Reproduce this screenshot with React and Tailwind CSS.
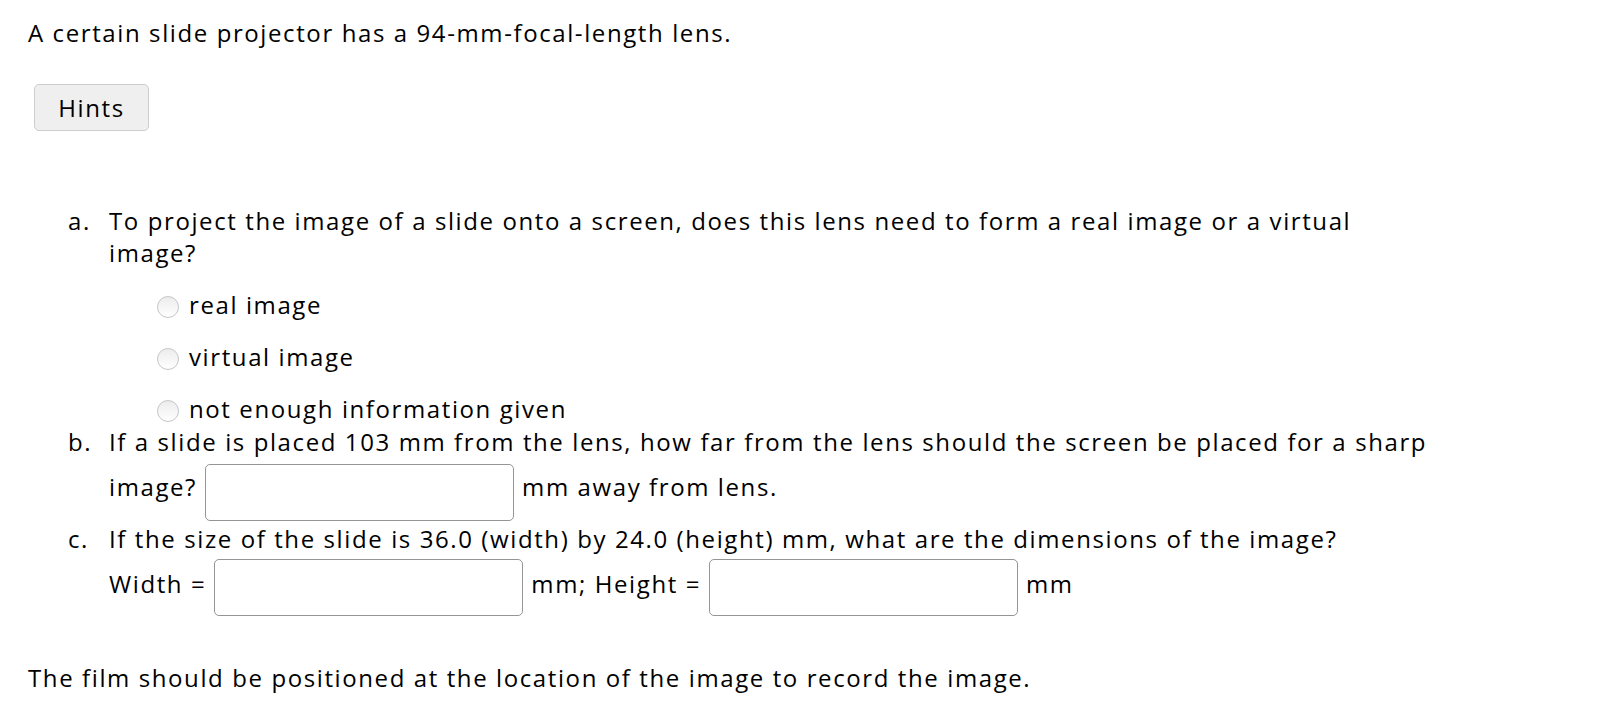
const options = ["real image", "virtual image", "not enough information given"];

function Blank() {
  return <input type="text" className="w-[309px] h-[57px] shrink-0 border border-[#959595] rounded-[5px] bg-white outline-none" />;
}

export default function App() {
  return (
    <div
      className="min-h-screen bg-white text-black pl-[28px] pt-[17px] text-[24px] leading-[32px] tracking-[1.6px] whitespace-nowrap"
      style={{ fontFamily: "'Open Sans', 'Noto Sans', sans-serif" }}
    >
      <p>A certain slide projector has a 94-mm-focal-length lens.</p>

      <button className="block mt-[35px] ml-[6px] w-[115px] h-[47px] bg-[#efefef] border border-[#cdcdcd] rounded-[5px] text-[24px]">
        Hints
      </button>

      <div className="mt-[74px] ml-[40px]">
        {/* a */}
        <div className="flex">
          <span className="w-[41px] shrink-0">a.</span>
          <div>
            <div>To project the image of a slide onto a screen, does this lens need to form a real image or a virtual</div>
            <div>image?</div>
            <div className="ml-[48px]">
              {options.map((o) => (
                <label key={o} className="flex items-center mt-[20px]">
                  <span className="w-[22px] h-[22px] mt-[4px] rounded-full border border-[#c6c6c6] bg-gradient-to-b from-[#ececec] to-white shrink-0" />
                  <span className="ml-[10px]">{o}</span>
                </label>
              ))}
            </div>
          </div>
        </div>

        {/* b */}
        <div className="flex mt-[1px]">
          <span className="w-[41px] shrink-0">b.</span>
          <div>
            <div>If a slide is placed 103 mm from the lens, how far from the lens should the screen be placed for a sharp</div>
            <div className="flex items-start gap-[8px] mt-[6px]">
              <span className="mt-[7px]">image?</span>
              <Blank />
              <span className="mt-[7px]">mm away from lens.</span>
            </div>
          </div>
        </div>

        {/* c */}
        <div className="flex mt-[2px]">
          <span className="w-[41px] shrink-0">c.</span>
          <div>
            <div>If the size of the slide is 36.0 (width) by 24.0 (height) mm, what are the dimensions of the image?</div>
            <div className="flex items-start gap-[8px] mt-[4px]">
              <span className="mt-[9px]">Width =</span>
              <Blank />
              <span className="mt-[9px]">mm; Height =</span>
              <Blank />
              <span className="mt-[9px]">mm</span>
            </div>
          </div>
        </div>
      </div>

      <p className="mt-[46px]">The film should be positioned at the location of the image to record the image.</p>
    </div>
  );
}
